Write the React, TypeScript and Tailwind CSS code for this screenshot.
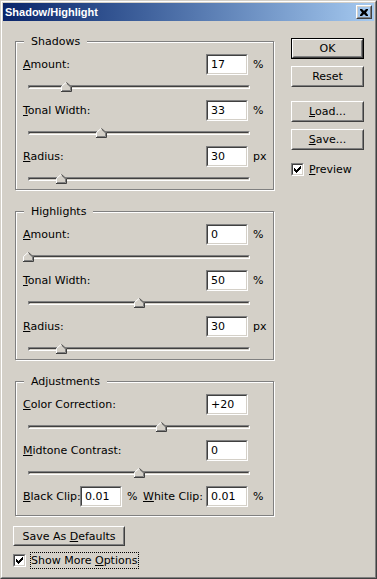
import React from "react";

interface IParam {
  label: React.ReactNode;
  value: string;
  unit?: string;
  pos: number;
}

const SHADOWS: IParam[] = [
  { label: <><u>A</u>mount:</>, value: "17", unit: "%", pos: 38 },
  { label: <><u>T</u>onal Width:</>, value: "33", unit: "%", pos: 73 },
  { label: <><u>R</u>adius:</>, value: "30", unit: "px", pos: 33 },
];

const HIGHLIGHTS: IParam[] = [
  { label: <><u>A</u>mount:</>, value: "0", unit: "%", pos: 0 },
  { label: <><u>T</u>onal Width:</>, value: "50", unit: "%", pos: 111 },
  { label: <><u>R</u>adius:</>, value: "30", unit: "px", pos: 33 },
];

const ADJUSTMENTS: IParam[] = [
  { label: <><u>C</u>olor Correction:</>, value: "+20", pos: 133 },
  { label: <><u>M</u>idtone Contrast:</>, value: "0", pos: 111 },
];

const Field = ({ value }: { value: string }) => (
  <div className="shrink-0 w-[42px] h-[21px] border border-t-[#808080] border-l-[#808080] border-b-white border-r-white">
    <div className="h-full flex items-center pl-[3px] bg-white border border-t-[#404040] border-l-[#404040] border-b-[#d4d0c8] border-r-[#d4d0c8] text-black">
      {value}
    </div>
  </div>
);

const Thumb = () => (
  <svg width="11" height="10" viewBox="0 0 11 10" className="block">
    <polygon points="0.5,9.5 0.5,4.5 5.5,0 10.5,4.5 10.5,9.5" fill="#d4d0c8" />
    <polyline points="0.5,9 0.5,4.5 5,0.5" fill="none" stroke="#ffffff" />
    <polyline points="5.5,0.5 10.5,5 10.5,9.5 0,9.5" fill="none" stroke="#404040" />
    <polyline points="6,1.8 9.5,5 9.5,8.5 1,8.5" fill="none" stroke="#808080" />
  </svg>
);

const Slider = ({ pos, h }: { pos: number; h: string }) => (
  <div className={`${h} pt-[10px]`}>
    <div className="relative ml-[5px] w-[222px] h-[4px] border border-t-[#808080] border-l-[#808080] border-b-white border-r-white">
      <div className="h-full border border-t-[#404040] border-l-[#404040] border-b-[#d4d0c8] border-r-[#d4d0c8]" />
      <div className="absolute top-[-4px]" style={{ left: pos - 6 }}>
        <Thumb />
      </div>
    </div>
  </div>
);

const ParamRow = ({ item, last }: { item: IParam; last?: boolean }) => (
  <div>
    <div className="flex items-center h-[21px]">
      <span className="flex-1">{item.label}</span>
      <Field value={item.value} />
      <span className="w-[25px] pl-[5px]">{item.unit}</span>
    </div>
    <Slider pos={item.pos} h={last ? "h-[22px]" : "h-[25px]"} />
  </div>
);

const Group = ({
  title,
  className,
  children,
}: {
  title: string;
  className?: string;
  children: React.ReactNode;
}) => (
  <div
    className={`relative w-[259px] border border-[#808080] shadow-[1px_1px_0_#ffffff,inset_1px_1px_0_#ffffff] pl-[7px] pt-[12px] ${className ?? ""}`}
  >
    <span className="absolute left-[8px] top-[-7px] px-[7px] bg-[#d4d0c8] leading-[13px]">
      {title}
    </span>
    {children}
  </div>
);

const Button = ({
  children,
  className,
  isDefault,
}: {
  children: React.ReactNode;
  className?: string;
  isDefault?: boolean;
}) => (
  <div className={`${className ?? ""} ${isDefault ? "border border-black" : ""}`}>
    <div className="h-full border border-t-white border-l-white border-r-[#404040] border-b-[#404040]">
      <div className="h-full flex items-center justify-center border border-t-[#d4d0c8] border-l-[#d4d0c8] border-r-[#808080] border-b-[#808080] text-black">
        {children}
      </div>
    </div>
  </div>
);

const Checkbox = () => (
  <div className="shrink-0 w-[13px] h-[13px] border border-t-[#808080] border-l-[#808080] border-b-white border-r-white">
    <div className="h-full flex items-center justify-center bg-white border border-t-[#404040] border-l-[#404040] border-b-[#d4d0c8] border-r-[#d4d0c8]">
      <svg width="7" height="7" viewBox="0 0 7 7" className="block">
        <path d="M0 2h1v1h1v1h1V3h1V2h1V1h1V0h1v3H6v1H5v1H4v1H3v1H2V6H1V5H0z" fill="#000000" />
      </svg>
    </div>
  </div>
);

const TitleBar = () => (
  <div className="h-[18px] flex items-center justify-between pl-[2px] pr-[2px] bg-linear-to-r from-[#0a246a] to-[#a6caf0]">
    <span className="font-['Liberation_Sans',sans-serif] font-bold text-[11px] text-white">
      Shadow/Highlight
    </span>
    <Button className="w-[16px] h-[14px]">
      <svg width="8" height="7" viewBox="0 0 8 7" className="block">
        <path d="M0 0h2l2 2 2-2h2v1L6 3.5 8 6v1H6L4 5 2 7H0V6l2-2.5L0 1z" fill="#000000" />
      </svg>
    </Button>
  </div>
);

export default function App() {
  return (
    <div className="w-[377px] h-[579px] overflow-hidden bg-[#d4d0c8] border border-t-[#d4d0c8] border-l-[#d4d0c8] border-r-[#404040] border-b-[#404040] font-['DejaVu_Sans',sans-serif] text-[11px] text-black leading-none">
      <div className="h-full p-px border border-t-white border-l-white border-r-[#808080] border-b-[#808080]">
        <TitleBar />
        <div className="flex">
          <div className="pl-[12px] pt-[20px]">
            <Group title="Shadows">
              {SHADOWS.map((item, i) => (
                <ParamRow key={i} item={item} last={i === SHADOWS.length - 1} />
              ))}
            </Group>
            <Group title="Highlights" className="mt-[21px]">
              {HIGHLIGHTS.map((item, i) => (
                <ParamRow key={i} item={item} last={i === HIGHLIGHTS.length - 1} />
              ))}
            </Group>
            <Group title="Adjustments" className="mt-[21px] pb-[8px]">
              {ADJUSTMENTS.map((item, i) => (
                <ParamRow key={i} item={item} />
              ))}
              <div className="flex items-center h-[21px] whitespace-nowrap">
                <span className="shrink-0 w-[57px]">
                  <u>B</u>lack Clip:
                </span>
                <Field value="0.01" />
                <span className="shrink-0 w-[21px] pl-[5px]">%</span>
                <span className="flex-1">
                  <u>W</u>hite Clip:
                </span>
                <Field value="0.01" />
                <span className="w-[25px] pl-[5px]">%</span>
              </div>
            </Group>
            <Button className="ml-[-2px] mt-[10px] w-[112px] h-[20px]">
              <span>
                Save As <u>D</u>efaults
              </span>
            </Button>
            <div className="ml-[-2px] mt-[6px] flex items-center">
              <Checkbox />
              <div className="ml-[4px] h-[17px] flex items-center whitespace-nowrap border border-dotted border-black pr-[1px]">
                <span>
                  Show More <u>O</u>ptions
                </span>
              </div>
            </div>
          </div>
          <div className="ml-[17px] pt-[17px] w-[73px]">
            <Button isDefault className="h-[21px]">
              OK
            </Button>
            <Button className="mt-[7px] h-[21px]">Reset</Button>
            <Button className="mt-[14px] h-[21px]">
              <span>
                <u>L</u>oad...
              </span>
            </Button>
            <Button className="mt-[7px] h-[21px]">
              <span>
                <u>S</u>ave...
              </span>
            </Button>
            <div className="mt-[13px] flex items-center">
              <Checkbox />
              <span className="ml-[5px]">
                <u>P</u>review
              </span>
            </div>
          </div>
        </div>
      </div>
    </div>
  );
}
